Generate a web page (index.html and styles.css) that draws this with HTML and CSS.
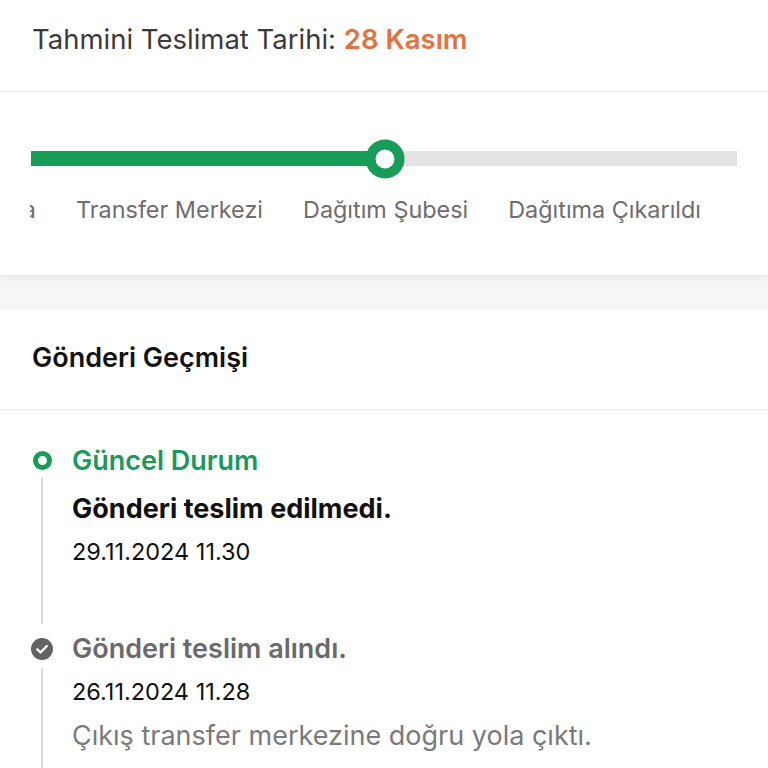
FILE: index.html
```html
<html>
    <head>
        <title>Gönderi Takip</title>
        <link rel="stylesheet" href="styles.css">
    </head>
    <body>
        <div class="tahmin">
            <span class="tahmin-label">Tahmini Teslimat Tarihi:</span>
            <span class="tahmin-tarih">28 Kasım</span>
        </div>

        <div class="ilerleme">
            <div class="cizgi">
                <div class="dolu" style="width: 354px"></div>
                <div class="nokta" style="left: 354px"></div>
            </div>
            <div class="adimlar">
                <div class="adim kesik"><span>Çıkış Şubesinde Yolda</span></div>
                <div class="adim">Transfer Merkezi</div>
                <div class="adim">Dağıtım Şubesi</div>
                <div class="adim">Dağıtıma Çıkarıldı</div>
            </div>
        </div>

        <div class="ara"></div>

        <div class="gecmis">
            <div class="gecmis-baslik">Gönderi Geçmişi</div>
            <div class="zaman">
                <div class="olay guncel">
                    <div class="ikon">
                        <span class="halka"></span>
                        <span class="dikey"></span>
                    </div>
                    <div class="icerik">
                        <div class="olay-baslik">Güncel Durum</div>
                        <div class="olay-metin">Gönderi teslim edilmedi.</div>
                        <div class="olay-tarih">29.11.2024 11.30</div>
                    </div>
                </div>
                <div class="olay">
                    <div class="ikon">
                        <svg class="tik" width="22" height="22" viewBox="0 0 22 22">
                            <circle cx="11" cy="11" r="11" fill="#636363"/>
                            <path d="M6.3 11.4 L9.5 14.5 L15.8 8" fill="none" stroke="#fff" stroke-width="2.4" stroke-linecap="round" stroke-linejoin="round"/>
                        </svg>
                        <span class="dikey"></span>
                    </div>
                    <div class="icerik">
                        <div class="olay-baslik">Gönderi teslim alındı.</div>
                        <div class="olay-tarih">26.11.2024 11.28</div>
                        <div class="olay-aciklama">Çıkış transfer merkezine doğru yola çıktı.</div>
                    </div>
                </div>
            </div>
        </div>
    </body>
</html>
```

FILE: styles.css
```css
*{
    margin: 0;
    padding: 0;
    box-sizing: border-box;
}
body{
    margin: 0;
    background: #fff;
    font-family: Inter, "Noto Sans", sans-serif;
    color: #111;
}

/* tahmini teslimat */
.tahmin{
    height: 92px;
    padding: 23px 32px 0 32px;
    border-bottom: 1px solid #e6e6e6;
    font-size: 27.5px;
    line-height: 32px;
    color: #3a3a3a;
    white-space: nowrap;
}
.tahmin-tarih{
    color: #e8703a;
    font-weight: 600;
}

/* ilerleme */
.ilerleme{
    height: 183px;
    padding-top: 59px;
    background: #fff;
    box-shadow: 0 3px 6px rgba(0, 0, 0, 0.06);
    position: relative;
    z-index: 2;
}
.cizgi{
    position: relative;
    margin: 0 31px;
    height: 15px;
    background: #e3e3e3;
}
.dolu{
    height: 100%;
    background: #169d57;
}
.nokta{
    position: absolute;
    top: 50%;
    width: 39px;
    height: 39px;
    border: 10px solid #169d57;
    border-radius: 50%;
    background: #fff;
    transform: translate(-50%, -50%);
}
.adimlar{
    display: flex;
    gap: 40px;
    margin: 30px 0 0 30px;
    overflow: hidden;
    white-space: nowrap;
    font-size: 23.4px;
    line-height: 28px;
    color: #6e6e6e;
}
.adim{
    flex-shrink: 0;
}
.adim.kesik{
    width: 6px;
    overflow: hidden;
    display: flex;
    justify-content: flex-end;
}
.adim.kesik span{
    flex-shrink: 0;
}

.ara{
    height: 35px;
    background: #f6f6f6;
}

/* gecmis */
.gecmis-baslik{
    height: 100px;
    padding: 32px 32px 0 32px;
    border-bottom: 1px solid #e3e3e3;
    font-size: 27px;
    line-height: 32px;
    font-weight: 600;
    color: #111;
}
.zaman{
    padding: 35px 32px 0 31px;
}
.olay{
    display: flex;
    gap: 19px;
}
.ikon{
    width: 22px;
    display: flex;
    flex-direction: column;
    align-items: center;
    padding-top: 6px;
}
.halka{
    width: 19px;
    height: 19px;
    border: 5px solid #169d57;
    border-radius: 50%;
    flex-shrink: 0;
}
.tik{
    flex-shrink: 0;
    margin-top: -1px;
}
.dikey{
    flex: 1;
    width: 2px;
    background: #dcdcdc;
    margin: 8px 0 9px 0;
}
.icerik{
    flex: 1;
    padding-bottom: 28px;
}
.olay-baslik{
    font-size: 27px;
    line-height: 32px;
    font-weight: 600;
    color: #6a6a6a;
}
.guncel .olay-baslik{
    color: #1a9a5a;
}
.olay-metin{
    margin-top: 16px;
    font-size: 27px;
    line-height: 32px;
    font-weight: 700;
    color: #111;
}
.olay-tarih{
    margin-top: 13px;
    font-size: 23.5px;
    line-height: 28px;
    color: #111;
}
.guncel .icerik{
    padding-bottom: 67px;
}
.olay-aciklama{
    margin-top: 14px;
    font-size: 27px;
    line-height: 32px;
    color: #7a7a7a;
}
```
